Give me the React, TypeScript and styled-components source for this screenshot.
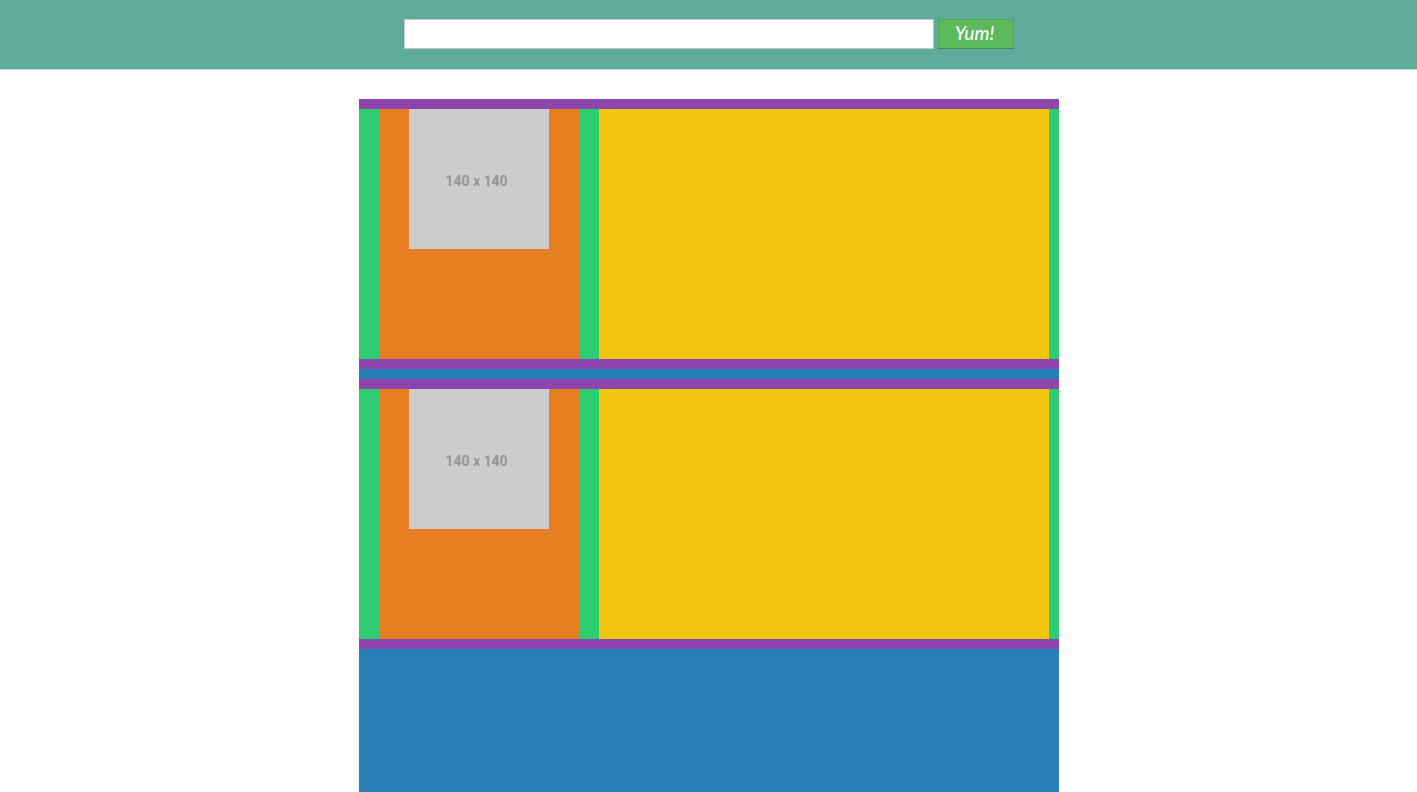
import React from "react";
import styled, { createGlobalStyle } from "styled-components";

const GlobalStyle = createGlobalStyle`
  *, *::before, *::after { box-sizing: border-box; }
  body {
    margin: 0;
    background: #fff;
    font-family: "Liberation Sans", Arial, sans-serif;
  }
`;

const Page = styled.div`
  display: flex;
  flex-direction: column;
  min-height: 100vh;
`;

const Header = styled.header`
  padding: 19px 20px 20px;
  background: #5fab9b;
  border-bottom: 1px solid #c8dcd7;
`;

const SearchForm = styled.form`
  display: flex;
  gap: 4px;
  max-width: 610px;
  margin: 0 auto;
`;

const SearchInput = styled.input`
  flex: 1;
  min-width: 0;
  height: 30px;
  padding: 4px 8px;
  border: 1px solid #c4c4c4;
  border-radius: 0;
  background: #fff;
  font: 14px "Liberation Sans", Arial, sans-serif;
`;

const YumButton = styled.button`
  width: 76px;
  height: 30px;
  padding: 0 2px 2px 0;
  border: 1px solid #51a351;
  border-bottom-color: #458b45;
  border-radius: 0;
  background: #5cb85c;
  color: #fff;
  font: italic 500 19px/26px "Lato", cursive;
  cursor: pointer;
`;

const Feed = styled.main`
  flex: 1;
  display: flex;
  flex-direction: column;
  gap: 10px;
  width: 100%;
  max-width: 700px;
  margin: 29px auto 0;
  background: #2980b9;
`;

const Post = styled.article`
  padding: 10px 0;
  background: #8e44ad;
`;

const PostBody = styled.div`
  display: flex;
  gap: 20px;
  min-height: 250px;
  padding: 0 10px 0 20px;
  background: #2ecc71;
`;

const Profile = styled.div`
  flex: 0 0 200px;
  display: flex;
  justify-content: center;
  align-items: flex-start;
  background: #e67e22;
`;

const Placeholder = styled.div`
  display: flex;
  align-items: center;
  justify-content: center;
  width: 140px;
  height: 140px;
  padding: 4px 4px 0 0;
  background: #ccc;
  color: #969696;
  font: bold 14px/20px "Roboto", sans-serif;
`;

const Content = styled.div`
  flex: 1;
  background: #f1c40f;
`;

const posts = [1, 2];

export default function App() {
  return (
    <Page>
      <GlobalStyle />
      <Header>
        <SearchForm onSubmit={(e: React.FormEvent) => e.preventDefault()}>
          <SearchInput type="text" aria-label="Search" />
          <YumButton type="submit">Yum!</YumButton>
        </SearchForm>
      </Header>
      <Feed>
        {posts.map((id) => (
          <Post key={id}>
            <PostBody>
              <Profile>
                <Placeholder>140 x 140</Placeholder>
              </Profile>
              <Content />
            </PostBody>
          </Post>
        ))}
      </Feed>
    </Page>
  );
}
